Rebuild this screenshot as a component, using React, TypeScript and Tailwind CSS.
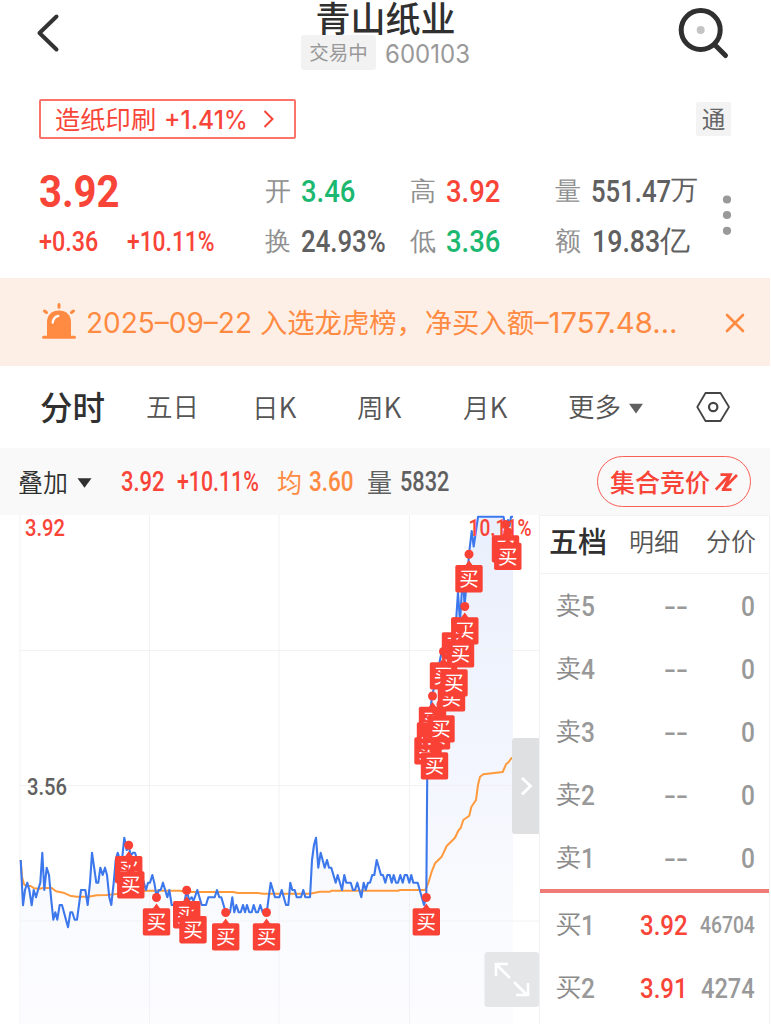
import { useLayoutEffect, useRef, useState } from "react";
import type { ReactNode } from "react";

/** Condenses its text horizontally so that it fills the width given by its class. */
function Fit({ className = "", children }: { className?: string; children: ReactNode }) {
  const outer = useRef<HTMLSpanElement>(null);
  const inner = useRef<HTMLSpanElement>(null);
  const [scale, setScale] = useState(1);
  useLayoutEffect(() => {
    if (outer.current && inner.current) {
      setScale(outer.current.clientWidth / inner.current.offsetWidth);
    }
  }, []);
  return (
    <span ref={outer} className={"block shrink-0 whitespace-nowrap pt-[2px] leading-none " + className}>
      <span ref={inner} className="inline-block origin-left" style={{ transform: `scaleX(${scale})` }}>
        {children}
      </span>
    </span>
  );
}

function Cn({ className = "", children }: { className?: string; children: ReactNode }) {
  return <span className={"block shrink-0 whitespace-nowrap leading-none pb-[1px] " + className}>{children}</span>;
}

const num = "font-[Roboto,sans-serif]";

function Header() {
  return (
    <header className="flex h-[88px] items-start justify-between">
      <svg className="ml-[36px] mt-[13px] h-10 w-6" viewBox="0 0 24 40" fill="none" stroke="#333" strokeWidth="4" strokeLinecap="round" strokeLinejoin="round">
        <path d="M20.5 3.5 3.5 20 20.5 36.5" />
      </svg>
      <div className="ml-[34px] flex flex-col items-center">
        <h1 className="h-[35px] whitespace-nowrap text-[35px] font-medium leading-[33px] text-[#303030]">青山纸业</h1>
        <div className="flex h-[35px] items-center gap-[9px]">
          <span className="flex h-[35px] w-[75px] items-center justify-center rounded-[3px] bg-[#f2f2f2] text-[#999]">
            <Cn className="text-[19.5px]">交易中</Cn>
          </span>
          <Fit className="w-[85px] font-[Inter,sans-serif] text-[26px] text-[#999]">600103</Fit>
        </div>
      </div>
      <svg className="mr-[40px] mt-[5px] h-[56px] w-[54px]" viewBox="0 0 54 56" fill="none" stroke="#303030">
        <circle cx="23.7" cy="25" r="19.5" strokeWidth="5" />
        <path d="m38 40 10.5 10.5" strokeWidth="5" strokeLinecap="round" />
        <circle cx="23.7" cy="25" r="4" fill="#c4c4c4" stroke="none" />
      </svg>
    </header>
  );
}

function Sector() {
  return (
    <section className="flex h-[75px] items-start justify-between pl-[39px] pr-[40px] pt-[11px]">
      <div className="flex h-10 w-[257px] items-center rounded-[2px] border-2 border-[#fb746c] pl-[14px] text-[#f94438]">
        <Cn className="text-[25.3px]">造纸印刷</Cn>
        <Fit className="ml-[8px] w-[84px] font-[Inter,sans-serif] text-[25.5px]">
          <span className="font-medium">+1.41</span>%
        </Fit>
        <svg className="ml-[15px] h-5 w-3" viewBox="0 0 12 20" fill="none" stroke="currentColor" strokeWidth="2">
          <path d="m1.5 2 8 8-8 8" />
        </svg>
      </div>
      <span className="mt-[3px] flex h-[34px] w-[35px] items-center justify-center rounded-[2px] bg-[#f3f3f3] text-[#666]">
        <Cn className="text-[23.5px]">通</Cn>
      </span>
    </section>
  );
}

function Quote() {
  return (
    <section className="flex h-[115px]">
      <div className="w-[265px] pl-[39px] text-[#f94438]">
        <div className="flex h-[57px] items-center">
          <Fit className={`mb-[2px] w-[81px] text-[44px] font-bold ${num}`}>3.92</Fit>
        </div>
        <div className={`flex h-[43px] items-center text-[28.5px] font-medium ${num}`}>
          <Fit className="w-[59px]">+0.36</Fit>
          <Fit className="ml-[29px] w-[88px]">+10.11%</Fit>
        </div>
      </div>
      <div className={`grid w-[450px] grid-cols-[145px_145px_160px] grid-rows-[56px_44px] items-center text-[31.5px] font-medium ${num}`}>
        <div className="flex items-center">
          <Cn className="text-[26px] font-[350] text-[#909090]">开</Cn>
          <Fit className="ml-[10px] w-[54px] text-[#1db870]">3.46</Fit>
        </div>
        <div className="flex items-center">
          <Cn className="text-[26px] font-[350] text-[#909090]">高</Cn>
          <Fit className="ml-[10px] w-[54px] text-[#f94438]">3.92</Fit>
        </div>
        <div className="flex items-center">
          <Cn className="text-[26px] font-[350] text-[#909090]">量</Cn>
          <Fit className="ml-[10px] w-[80px] text-[#606060]">551.47</Fit>
          <Cn className="text-[27px] font-normal text-[#606060]">万</Cn>
        </div>
        <div className="flex items-center">
          <Cn className="text-[26px] font-[350] text-[#909090]">换</Cn>
          <Fit className="ml-[10px] w-[85px] text-[#606060]">24.93%</Fit>
        </div>
        <div className="flex items-center">
          <Cn className="text-[26px] font-[350] text-[#909090]">低</Cn>
          <Fit className="ml-[10px] w-[54px] text-[#1db870]">3.36</Fit>
        </div>
        <div className="flex items-center">
          <Cn className="text-[26px] font-[350] text-[#909090]">额</Cn>
          <Fit className="ml-[11px] w-[68px] text-[#606060]">19.83</Fit>
          <Cn className="text-[30px] font-normal text-[#606060]">亿</Cn>
        </div>
      </div>
      <svg className="ml-[7px] mt-8 h-10 w-[10px]" viewBox="0 0 10 40" fill="#999">
        <circle cx="5" cy="4.5" r="4.1" />
        <circle cx="5" cy="20" r="4.1" />
        <circle cx="5" cy="35.8" r="4.1" />
      </svg>
    </section>
  );
}

function Notice() {
  return (
    <section className="mr-px flex h-[88px] items-center bg-[#feefe6] text-[#ff8a42]">
      <svg className="mb-[2px] ml-[42px] h-[36px] w-[34px]" viewBox="0 0 34 36" fill="none">
        <path d="M5 33V19C5 12 10 7.5 17 7.5S29 12 29 19V33Z" fill="#ff8a42" />
        <path d="M1.5 34.2h31M17 1.5v2.7M2.5 8l2 1.5M31.5 8l-2 1.5" stroke="#ff8a42" strokeWidth="3" strokeLinecap="round" />
        <path d="M10.8 19.5c.2-3.4 2-5.7 5.5-6.6" stroke="#fff" strokeWidth="2.4" strokeLinecap="round" />
      </svg>
      <Fit className="ml-[10px] w-[166px] font-[Inter,sans-serif] text-[28px]">2025–09–22</Fit>
      <Cn className="ml-[8px] text-[27.3px]">入选龙虎榜，</Cn>
      <Cn className="ml-px text-[27.3px]">净买入额</Cn>
      <Fit className="w-[143px] font-[Inter,sans-serif] text-[28px]">–1757.48…</Fit>
      <svg className="ml-[48px] mt-px h-5 w-5" viewBox="0 0 20 20" stroke="currentColor" strokeWidth="2.6" strokeLinecap="round">
        <path d="m2 2 16 16M18 2 2 18" />
      </svg>
    </section>
  );
}

function Tabs() {
  return (
    <nav className="flex h-[82px] items-center text-[26.5px] font-[350] text-[#555]">
      <Cn className="ml-[40px] w-[106px] text-[32.5px] font-medium text-[#303030]">分时</Cn>
      <Cn className="w-[106px]">五日</Cn>
      <Cn className="w-[105px]">日<span className="text-[28px]">K</span></Cn>
      <Cn className="w-[106px]">周<span className="text-[28px]">K</span></Cn>
      <Cn className="w-[105px]">月<span className="text-[28px]">K</span></Cn>
      <Cn>更多</Cn>
      <svg className="ml-[7px] mt-[3px] h-[11px] w-4" viewBox="0 0 16 11" fill="#606060">
        <path d="M1 .8h14L8 10.5Z" />
      </svg>
      <svg className="ml-[52px] h-[32px] w-[34px]" viewBox="0 0 34 32" fill="none" stroke="#444" strokeWidth="1.8" strokeLinejoin="round">
        <path d="M9.5 2h15L33 16l-8.500 14H9.500L1.300 16Z" />
        <circle cx="17.200" cy="16" r="4.200" strokeWidth="2.200" />
      </svg>
    </nav>
  );
}

function Toolbar() {
  return (
    <section className="mr-px flex h-[67px] items-center bg-[#f9f9f9] text-[25px]">
      <Cn className="ml-[18px] font-[350] text-[#303030]">叠加</Cn>
      <svg className="ml-[9px] mt-[2px] h-[10px] w-[15px]" viewBox="0 0 15 10" fill="#303030">
        <path d="M.5.300h14L7.500 9.800Z" />
      </svg>
      <div className={`flex items-center text-[27px] text-[#f94438] ${num}`}>
        <Fit className="ml-[29px] w-[44px] font-medium">3.92</Fit>
        <Fit className="ml-[12px] w-[82px] font-medium">+10.11%</Fit>
      </div>
      <Cn className="ml-[18px] text-[#ff8a42]">均</Cn>
      <Fit className={`ml-[7px] w-[45px] text-[27px] font-medium text-[#ff8a42] ${num}`}>3.60</Fit>
      <Cn className="ml-[13px] text-[#606060]">量</Cn>
      <Fit className={`ml-[8px] w-[49px] text-[27px] font-medium text-[#606060] ${num}`}>5832</Fit>
      <button className="ml-auto mr-[19px] flex h-[51px] w-[154px] items-center rounded-full border border-[#fa5f56] pl-[12px] text-[#f94438]">
        <Cn className="font-medium">集合竞价</Cn>
        <svg className="ml-[5px] h-[18px] w-[23px]" viewBox="0 0 23 18" fill="none" stroke="currentColor" strokeWidth="2.700">
          <path d="M.8 16.500 15 1.500M22 2 7.500 16.800M5.500 1.600H15.500L8.500 16.600H16.500" />
        </svg>
      </button>
    </section>
  );
}

const pricePoints: [number, number][] = [
  [20.7, 860], [23, 905.3], [25, 890], [27.3, 882.7], [29.3, 890], [31.7, 905.3], [33.7, 890], [36, 897.3], [38, 890], [40.3, 882.7],
  [42.3, 852.7], [44.3, 890], [46.7, 867.7], [49, 875], [51, 897.3], [53.3, 919.7], [55.3, 912.3], [57.3, 919.7], [59.7, 905], [62, 905],
  [68, 927.3], [70.3, 912.3], [72.3, 912.3], [74.7, 919.7], [77, 919.7], [81, 890], [85.3, 890], [87.7, 905], [90, 882.7], [92, 852.7],
  [96.3, 882.7], [98.3, 882.7], [100.3, 867.7], [102.7, 875], [105, 867.7], [107, 875], [109.3, 897.3], [111.3, 905], [113.7, 882.7],
  [115.7, 860], [117.7, 852.7], [120, 860], [122, 860], [124.3, 837.7], [126.7, 850], [128.7, 845], [130.7, 856], [133, 852.7], [135, 852.7],
  [137.3, 860], [146, 890], [148, 882.7], [150, 882.7], [152.3, 875], [154.3, 882.7], [156.7, 897.3], [158.7, 890], [160.7, 890], [163, 882.7],
  [167.3, 897.3], [169.3, 890], [171.7, 905], [184, 905], [186.7, 890], [189, 900], [191.7, 897.3], [193.5, 901], [197.3, 890], [201.7, 905],
  [206, 905], [208.3, 897.3], [214.7, 897.3], [217, 890], [219.3, 897.3], [221.3, 897.3], [225.7, 912.3], [230, 912.3], [232.3, 897.3],
  [234.3, 912.3], [236.3, 905], [238.7, 912.3], [240.7, 912.3], [243, 905], [245, 912.3], [247, 905], [249.3, 912.3], [251.7, 912.3],
  [253.7, 905], [256, 912.3], [258, 912.3], [260.3, 905], [262.7, 912.3], [266.7, 912.3], [270.7, 882.7], [275, 897.3], [279.3, 897.3],
  [281.7, 890], [286, 905], [288.3, 905], [290.3, 882.7], [292.3, 890], [294.7, 890], [296.7, 897.3], [301, 897.3], [303.3, 890],
  [305.3, 897.3], [310, 897.3], [312, 860], [314, 845], [316, 837.7], [318.3, 867.7], [320.7, 852.7], [324.7, 867.7], [327, 860],
  [329, 867.7], [331.3, 867.7], [335.7, 882.7], [337.7, 875], [342, 890], [344.3, 875], [346.3, 882.7], [350.7, 882.7], [353, 890],
  [355, 890], [357.3, 882.7], [361.3, 897.3], [363.7, 882.7], [365.7, 890], [368, 882.7], [370, 882.7], [372.3, 875], [374.3, 875],
  [376.7, 860], [381, 875], [383, 875], [385.3, 882.7], [387.3, 875], [389.7, 875], [391.7, 882.7], [393.7, 875], [396, 882.7],
  [398, 882.7], [400.3, 875], [402.7, 882.7], [404.7, 875], [407, 875], [409.3, 882.7], [411.3, 875], [413.3, 882.7], [417.7, 882.7],
  [424, 905], [426.3, 897.3], [427.3, 765], [430, 715], [432, 696], [436, 680], [442, 650], [450, 645], [456, 622], [458, 592],
  [460, 622], [463, 572], [464.5, 606], [467, 580], [469, 554], [471.7, 531], [473.7, 546.5], [478, 516.8], [503.5, 516.8],
  [506, 530], [508, 520], [509.5, 526], [511, 516.8], [513, 516.8],
];

const averagePoints: [number, number][] = [
  [20.7, 860], [22, 877], [24, 884.3], [26.7, 886], [30.7, 886], [34.3, 888.3], [39.3, 888.7], [43.3, 888], [51.7, 888], [56, 891.3],
  [63.3, 892.7], [70, 895.7], [76.7, 896.7], [88.3, 896.7], [96.7, 895.3], [106.7, 895], [116.7, 894], [130, 892], [146, 890.7],
  [180, 890.7], [187, 892], [233, 892], [238, 893], [258, 893], [263, 893.7], [310, 893.7], [315, 892.7], [320, 891.7], [330, 891.7],
  [332, 890.7], [398, 890.7], [400, 890], [425.3, 890], [428.3, 883], [431.7, 871.7], [435, 863.3], [441.7, 856.7], [446.7, 846],
  [455, 837.7], [458.3, 830.7], [460.7, 828], [463.3, 820], [469.3, 815.7], [471.3, 807], [476, 800], [478, 785], [480, 776.7],
  [483.3, 774.3], [502.7, 772], [506, 764.3], [508.7, 762], [511.3, 758.3], [513, 757.7],
];

/** Trade markers by the position of their dot, back to front. */
const markers: [number, number][] = [
  [128.7, 845.3], [130.8, 860.5], [156.5, 897.5], [186.7, 890.3], [193, 905.3], [225.7, 912.5], [266.5, 912.5], [426.3, 897.5],
  [428, 726.5], [430.5, 711.5], [432.5, 696], [436.5, 711.5], [441, 704.5], [434.5, 741.5],
  [451.5, 673.5], [443.5, 651.5], [454, 658.5], [455.5, 621.5], [464.8, 606.5], [460.5, 629.5],
  [469, 554.3], [505.5, 524.5], [507.8, 532],
];

const toPath = (points: [number, number][]) => "M" + points.map(([x, y]) => `${x} ${y}`).join("L");

function Chart() {
  const price = toPath(pricePoints);
  return (
    <svg className="block h-[509px] w-[540px] shrink-0 overflow-visible" viewBox="0 515 540 509" fill="none">
      <defs>
        <linearGradient id="area" gradientUnits="userSpaceOnUse" x1="0" y1="515" x2="0" y2="1024">
          <stop offset="0" stopColor="#e9effc" />
          <stop offset="0.5" stopColor="#f3f6fe" />
          <stop offset="0.8" stopColor="#fafbfe" />
          <stop offset="1" stopColor="#fcfcff" />
        </linearGradient>
      </defs>
      <path d={`${price}V1024H20.700Z`} fill="url(#area)" />
      <path d="M20 515V1024M149.500 515V1024M279 515V1024M409.500 515V1024M20 650.500H539M20 785.500H539M20 921H539M539.500 515V1024" stroke="#f2f2f4" />
      <path d={toPath(averagePoints)} stroke="#ff9a3c" strokeWidth="2" strokeLinejoin="round" />
      <path d={price} stroke="#3c78ec" strokeWidth="2.100" strokeLinejoin="round" />
      <g className={`font-medium ${num}`} fontSize="24.500">
        <text x="25" y="536.200" fill="#f94438" textLength="40" lengthAdjust="spacingAndGlyphs">3.92</text>
        <text x="468.500" y="536.200" fill="#f94438" textLength="63" lengthAdjust="spacingAndGlyphs">10.11%</text>
        <text x="27" y="795.200" fill="#606060" fontSize="23" textLength="40" lengthAdjust="spacingAndGlyphs">3.56</text>
      </g>
      {markers.map(([x, y]) => (
        <g key={`${x}-${y}`} fill="#f94135">
          <circle cx={x} cy={y} r="4.500" />
          <path d={`M${x - 4} ${y + 11.500}L${x} ${y + 6}L${x + 4} ${y + 11.500}Z`} />
          <rect x={x - 13.700} y={y + 10.700} width="27.400" height="27.400" rx="1.800" />
          <text x={x} y={y + 31.500} fill="#fff" fontSize="19.500" textAnchor="middle">买</text>
        </g>
      ))}
      <path d="M539 738H515a3 3 0 0 0-3 3V831a3 3 0 0 0 3 3H539Z" fill="#dfe0e2" />
      <path d="m522 778 8.500 8-8.500 8.500" stroke="#fff" strokeWidth="2.800" />
      <rect x="484.500" y="952" width="54.500" height="55" rx="3" fill="#e5e6e7" />
      <path d="M496 976V964H508M497 965 510 978M514 982l13 13M516 995H528V983" stroke="#fff" strokeWidth="2.600" />
    </svg>
  );
}

function Level({ side, level, price = "--", children }: { side: string; level: string; price?: string; children: ReactNode }) {
  return (
    <div className={`flex h-[63px] items-center pl-[16px] text-[28px] font-medium text-[#999] ${num}`}>
      <Cn className="text-[25px] font-[350] text-[#8a8a8a]">{side}</Cn>
      <Fit className="w-[14px]">{level}</Fit>
      {price === "--" ? (
        <Fit className="ml-[69px] w-[24px]">--</Fit>
      ) : (
        <Fit className="ml-[45px] w-[48px] text-[#f94438]">{price}</Fit>
      )}
      <div className="ml-auto mr-[14px]">{children}</div>
    </div>
  );
}

function OrderBook() {
  return (
    <aside className="w-[230px] border-r border-t border-[#f2f2f2] bg-white">
      <div className="flex h-[58px] items-center border-b border-[#f2f2f2] pb-[7px] text-[25px] font-[350] text-[#555]">
        <Cn className="ml-[9px] w-[80px] text-[29px] font-medium text-[#303030]">五档</Cn>
        <Cn className="w-[77px]">明细</Cn>
        <Cn>分价</Cn>
      </div>
      {["5", "4", "3", "2", "1"].map((level) => (
        <Level key={level} side="卖" level={level}>
          <Fit className="w-[14px]">0</Fit>
        </Level>
      ))}
      <div className="h-1 bg-[#ee7b75]" />
      <Level side="买" level="1" price="3.92">
        <Fit className="w-[55px] text-[23.5px]">46704</Fit>
      </Level>
      <Level side="买" level="2" price="3.91">
        <Fit className="w-[54px]">4274</Fit>
      </Level>
    </aside>
  );
}

export default function App() {
  return (
    <main className="h-[1024px] w-[771px] overflow-hidden bg-white font-['Noto_Sans_CJK_SC',sans-serif]">
      <Header />
      <Sector />
      <Quote />
      <Notice />
      <Tabs />
      <Toolbar />
      <div className="flex h-[509px]">
        <Chart />
        <OrderBook />
      </div>
    </main>
  );
}
